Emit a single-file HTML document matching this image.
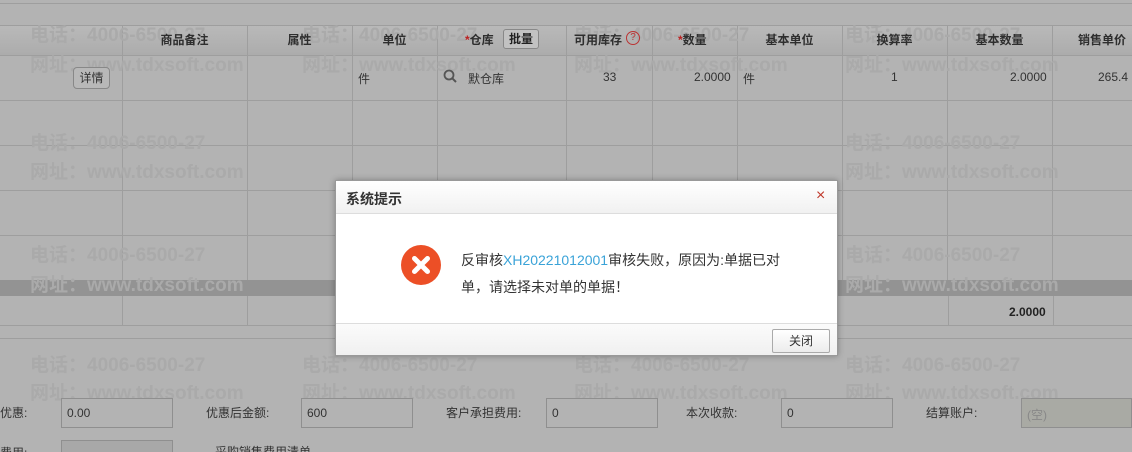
<!DOCTYPE html>
<html style="background:#b3b3b3;overflow:hidden;width:1132px;height:452px"><head><meta charset="utf-8"><style>
*{margin:0;padding:0;box-sizing:border-box}
body{width:1132px;height:452px;overflow:hidden;background:#b3b3b3;font-family:"Liberation Sans","Noto Sans CJK SC",sans-serif;font-size:12px;color:#333;position:relative}
#bg{position:absolute;left:0;top:0;width:1132px;height:452px;background:#b3b3b3}
.a{position:absolute}
.hl{position:absolute;left:0;width:1132px;height:1px;background:#9e9e9e}
.vl{position:absolute;width:1px;background:#9e9e9e}
.hd{position:absolute;top:26px;left:0;width:1132px;height:29px;background:linear-gradient(#b9b9b9,#acacac)}
.th{position:absolute;top:31px;font-weight:bold;color:#2e2e2e;font-size:12px;text-align:center}
.td{position:absolute;top:70px;color:#333}
.wm{position:absolute;color:#aaaaaa;font-weight:bold;font-size:19px;white-space:nowrap}
.inp{position:absolute;top:398px;height:30px;border:1px solid #8f8f8f;background:#b3b3b3;padding:7px 5px;color:#333}
.lb{position:absolute;top:404px;color:#333}
</style></head><body>
<div id="bg"></div>
<div class="hl" style="top:3px"></div>
<div class="hd"></div>
<div class="hl" style="top:25px"></div>
<div class="hl" style="top:55px"></div>
<div class="hl" style="top:100px"></div>
<div class="hl" style="top:145px"></div>
<div class="hl" style="top:190px"></div>
<div class="hl" style="top:235px"></div>
<div class="a" style="top:280px;left:0;width:1132px;height:16px;background:#939393"></div>
<div class="hl" style="top:325px"></div>
<div class="hl" style="top:338px"></div>
<div class="vl" style="left:122px;top:25px;height:255px"></div>
<div class="vl" style="left:247px;top:25px;height:255px"></div>
<div class="vl" style="left:352px;top:25px;height:255px"></div>
<div class="vl" style="left:437px;top:25px;height:255px"></div>
<div class="vl" style="left:566px;top:25px;height:255px"></div>
<div class="vl" style="left:652px;top:25px;height:255px"></div>
<div class="vl" style="left:737px;top:25px;height:255px"></div>
<div class="vl" style="left:842px;top:25px;height:255px"></div>
<div class="vl" style="left:947px;top:25px;height:255px"></div>
<div class="vl" style="left:1052px;top:25px;height:255px"></div>
<div class="vl" style="left:122px;top:296px;height:29px"></div>
<div class="vl" style="left:247px;top:296px;height:29px"></div>
<div class="vl" style="left:948px;top:296px;height:29px"></div>
<div class="vl" style="left:1053px;top:296px;height:29px"></div>

<div class="wm" style="left:30px;top:20px">电话：4006-6500-27</div>
<div class="wm" style="left:30px;top:50px">网址：www.tdxsoft.com</div>
<div class="wm" style="left:302px;top:20px">电话：4006-6500-27</div>
<div class="wm" style="left:302px;top:50px">网址：www.tdxsoft.com</div>
<div class="wm" style="left:574px;top:20px">电话：4006-6500-27</div>
<div class="wm" style="left:574px;top:50px">网址：www.tdxsoft.com</div>
<div class="wm" style="left:845px;top:20px">电话：4006-6500-27</div>
<div class="wm" style="left:845px;top:50px">网址：www.tdxsoft.com</div>
<div class="wm" style="left:30px;top:128px">电话：4006-6500-27</div>
<div class="wm" style="left:30px;top:157px">网址：www.tdxsoft.com</div>
<div class="wm" style="left:845px;top:128px">电话：4006-6500-27</div>
<div class="wm" style="left:845px;top:157px">网址：www.tdxsoft.com</div>
<div class="wm" style="left:30px;top:240px">电话：4006-6500-27</div>
<div class="wm" style="left:30px;top:270px">网址：www.tdxsoft.com</div>
<div class="wm" style="left:845px;top:240px">电话：4006-6500-27</div>
<div class="wm" style="left:845px;top:270px">网址：www.tdxsoft.com</div>
<div class="wm" style="left:30px;top:350px">电话：4006-6500-27</div>
<div class="wm" style="left:30px;top:378px">网址：www.tdxsoft.com</div>
<div class="wm" style="left:302px;top:350px">电话：4006-6500-27</div>
<div class="wm" style="left:302px;top:378px">网址：www.tdxsoft.com</div>
<div class="wm" style="left:574px;top:350px">电话：4006-6500-27</div>
<div class="wm" style="left:574px;top:378px">网址：www.tdxsoft.com</div>
<div class="wm" style="left:845px;top:350px">电话：4006-6500-27</div>
<div class="wm" style="left:845px;top:378px">网址：www.tdxsoft.com</div>

<div class="th" style="left:122px;width:125px">商品备注</div>
<div class="th" style="left:247px;width:105px">属性</div>
<div class="th" style="left:352px;width:85px">单位</div>
<div class="th" style="left:465px"><span style="color:#b22">*</span>仓库</div>
<div class="a" style="left:503px;top:29px;width:36px;height:20px;border:1px solid #888;border-radius:3px;background:#c2c2c2;font-weight:bold;text-align:center;line-height:18px;color:#222">批量</div>
<div class="th" style="left:574px">可用库存</div>
<div class="a" style="left:626px;top:31px;width:14px;height:14px;border:1px solid #b33;border-radius:50%;color:#b33;font-size:10px;text-align:center;line-height:12px">?</div>
<div class="th" style="left:678px"><span style="color:#b22">*</span>数量</div>
<div class="th" style="left:737px;width:105px">基本单位</div>
<div class="th" style="left:842px;width:105px">换算率</div>
<div class="th" style="left:947px;width:105px">基本数量</div>
<div class="th" style="left:1078px">销售单价</div>

<div class="a" style="left:73px;top:67px;width:37px;height:22px;border:1px solid #888;border-radius:4px;text-align:center;line-height:20px;background:#b8b8b8">详情</div>
<div class="td" style="left:358px">件</div>
<svg class="a" style="left:443px;top:69px" width="14" height="14"><circle cx="6" cy="6" r="4.5" fill="none" stroke="#555" stroke-width="1.8"/><line x1="9.3" y1="9.3" x2="13" y2="13" stroke="#555" stroke-width="2"/></svg>
<div class="td" style="left:468px">默仓库</div>
<div class="td" style="left:603px">33</div>
<div class="td" style="left:694px">2.0000</div>
<div class="td" style="left:743px">件</div>
<div class="td" style="left:891px">1</div>
<div class="td" style="left:1010px">2.0000</div>
<div class="td" style="left:1098px">265.4</div>
<div class="a" style="left:1009px;top:305px;font-weight:bold;color:#222">2.0000</div>

<div class="lb" style="left:0">优惠:</div>
<div class="inp" style="left:61px;width:112px">0.00</div>
<div class="lb" style="left:206px">优惠后金额:</div>
<div class="inp" style="left:301px;width:112px">600</div>
<div class="lb" style="left:446px">客户承担费用:</div>
<div class="inp" style="left:546px;width:112px">0</div>
<div class="lb" style="left:686px">本次收款:</div>
<div class="inp" style="left:781px;width:112px">0</div>
<div class="lb" style="left:926px">结算账户:</div>
<div class="inp" style="left:1021px;width:111px;background:#a9aaa4;color:#888">(空)</div>
<div class="lb" style="left:0;top:444px">费用:</div>
<div class="a" style="left:61px;top:440px;width:112px;height:12px;border:1px solid #8f8f8f;border-bottom:none;background:#a8a8a8"></div>
<div class="lb" style="left:215px;top:443px">采购销售费用清单</div>

<div class="a" style="left:335px;top:180px;width:503px;height:176px;background:#fff;border:1px solid #999;box-shadow:0 0 6px rgba(0,0,0,.3)">
 <div class="a" style="left:0;top:0;width:501px;height:33px;background:linear-gradient(#fff,#f1f1f1);border-bottom:1px solid #ddd"></div>
 <div class="a" style="left:10px;top:8px;font-size:14px;color:#333;font-weight:bold">系统提示</div>
 <div class="a" style="left:480px;top:6px;font-size:16px;color:#c0392b">×</div>
 <svg class="a" style="left:64px;top:63px" width="42" height="42"><circle cx="21" cy="21" r="20" fill="#ec4f26"/><path d="M14.5 14.5L27.5 27.5M27.5 14.5L14.5 27.5" stroke="#fff" stroke-width="5" stroke-linecap="round"/></svg>
 <div class="a" style="left:125px;top:66px;width:330px;font-size:14px;line-height:27px;color:#333">反审核<span style="color:#3aa3d8">XH20221012001</span>审核失败，原因为:单据已对单，请选择未对单的单据！</div>
 <div class="a" style="left:0;top:142px;width:501px;height:32px;background:linear-gradient(#fbfbfb,#f0f0f0);border-top:1px solid #ddd"></div>
 <div class="a" style="left:436px;top:148px;width:58px;height:24px;border:1px solid #aaa;border-radius:2px;background:linear-gradient(#fff,#ececec);text-align:center;line-height:22px;font-size:12px;color:#333">关闭</div>
</div>
</body></html>
